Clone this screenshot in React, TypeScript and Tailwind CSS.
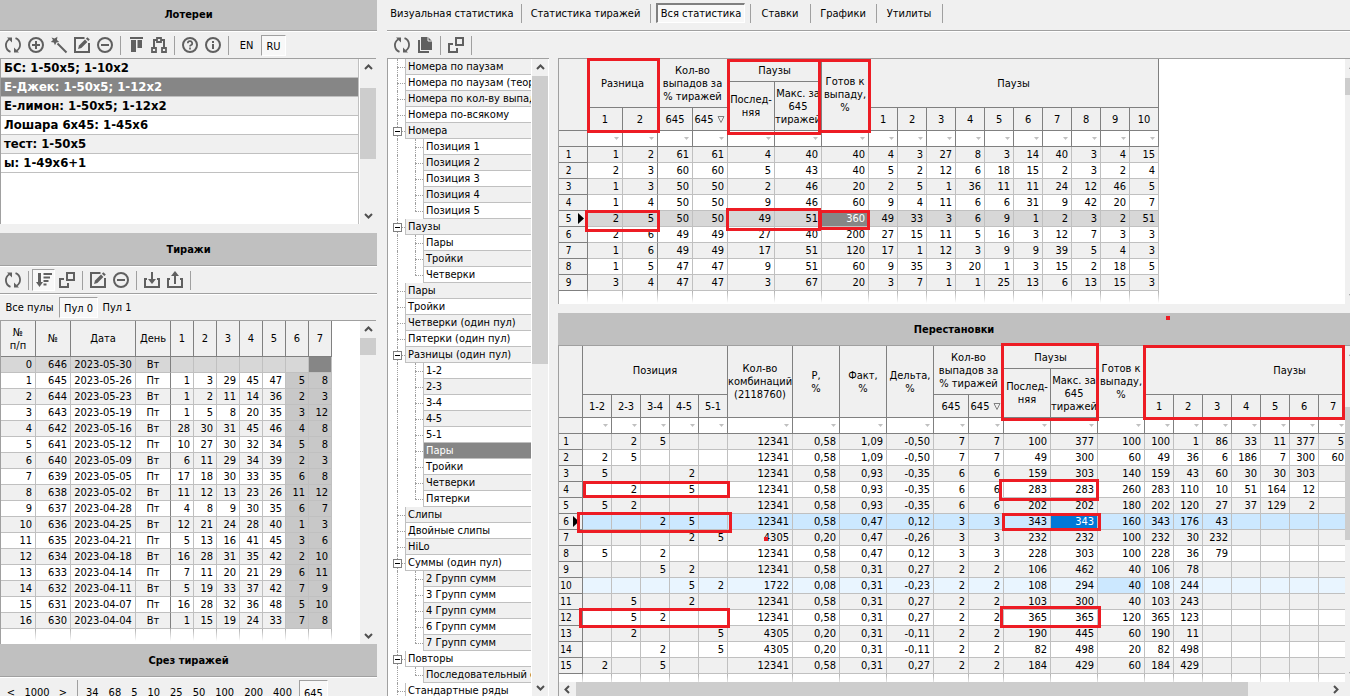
import { ReactNode } from "react"

const lotteries = [
  "БС: 1-50x5; 1-10x2",
  "Е-Джек: 1-50x5; 1-12x2",
  "Е-лимон: 1-50x5; 1-12x2",
  "Лошара 6x45: 1-45x6",
  "тест: 1-50x5",
  "ы: 1-49x6+1",
]

const draws = [
  "0|646|2023-05-30|Вт|||||||",
  "1|645|2023-05-26|Пт|1|3|29|45|47|5|8",
  "2|644|2023-05-23|Вт|1|2|11|14|36|2|3",
  "3|643|2023-05-19|Пт|1|5|8|20|35|3|12",
  "4|642|2023-05-16|Вт|28|30|31|45|46|4|8",
  "5|641|2023-05-12|Пт|10|27|30|32|34|5|8",
  "6|640|2023-05-09|Вт|6|11|29|34|39|2|3",
  "7|639|2023-05-05|Пт|17|18|30|33|35|6|8",
  "8|638|2023-05-02|Вт|11|12|13|23|26|11|12",
  "9|637|2023-04-28|Пт|4|8|9|30|35|6|7",
  "10|636|2023-04-25|Вт|12|21|24|28|40|1|3",
  "11|635|2023-04-21|Пт|5|13|16|41|45|3|6",
  "12|634|2023-04-18|Вт|16|28|31|35|42|2|10",
  "13|633|2023-04-14|Пт|7|11|20|21|29|6|11",
  "14|632|2023-04-11|Вт|5|19|33|37|42|7|9",
  "15|631|2023-04-07|Пт|16|28|32|36|48|5|10",
  "16|630|2023-04-04|Вт|1|15|19|24|33|7|8",
].map((row) => row.split("|"))

const diffs = [
  "1|2|61|61|4|40|40|4|3|27|8|3|14|40|3|4|15",
  "2|3|60|60|5|43|40|5|2|12|6|18|15|2|3|2|4",
  "1|3|50|50|2|46|20|2|5|1|36|11|11|24|12|46|5",
  "1|4|50|50|9|46|60|9|4|11|6|6|31|9|42|20|7",
  "2|5|50|50|49|51|360|49|33|3|6|9|1|2|3|2|51",
  "2|6|49|49|27|40|200|27|15|11|5|16|3|12|7|3|3",
  "1|6|49|49|17|51|120|17|1|12|3|9|9|39|5|4|3",
  "1|5|47|47|9|51|60|9|35|3|20|1|3|15|2|18|5",
  "3|4|47|47|3|67|20|3|7|1|1|25|13|6|13|15|3",
].map((row) => row.split("|"))

const swaps = [
  "|2|5|||12341|0,58|1,09|-0,50|7|7|100|377|100|100|1|86|33|11|377|5|||",
  "2|5||||12341|0,58|1,09|-0,50|7|7|49|300|60|49|36|6|186|7|300|60|||",
  "5|||2||12341|0,58|0,93|-0,35|6|6|159|303|140|159|43|60|30|30|303||||",
  "|2||5||12341|0,58|0,93|-0,35|6|6|283|283|260|283|110|10|51|164|12||||",
  "5|2||||12341|0,58|0,93|-0,35|6|6|202|202|180|202|120|27|37|129|2||||",
  "||2|5||12341|0,58|0,47|0,12|3|3|343|343|160|343|176|43|||||||",
  "|||2|5|4305|0,20|0,47|-0,26|3|3|232|232|100|232|30|232|||||||",
  "5||2|||12341|0,58|0,47|0,12|3|3|228|303|100|228|36|79|||||||",
  "||5|2||12341|0,58|0,31|0,27|2|2|106|462|40|106|78||||||||",
  "|||5|2|1722|0,08|0,31|-0,23|2|2|108|294|40|108|244||||||||",
  "|5||2||12341|0,58|0,31|0,27|2|2|103|300|40|103|243||||||||",
  "|5|2|||12341|0,58|0,31|0,27|2|2|365|365|120|365|123||||||||",
  "|2|||5|4305|0,20|0,31|-0,11|2|2|190|445|60|190|11||||||||",
  "||2||5|4305|0,20|0,31|-0,11|2|2|82|498|20|82|498||||||||",
  "2||5|||12341|0,58|0,31|0,27|2|2|184|429|60|184|429||||||||",
].map((row) => row.split("|"))

const tree: { label: string, children?: string[] }[] = [
  { label: "Номера по паузам" },
  { label: "Номера по паузам (теория)" },
  { label: "Номера по кол-ву выпадов" },
  { label: "Номера по-всякому" },
  { label: "Номера", children: ["Позиция 1", "Позиция 2", "Позиция 3", "Позиция 4", "Позиция 5"] },
  { label: "Паузы", children: ["Пары", "Тройки", "Четверки"] },
  { label: "Пары" },
  { label: "Тройки" },
  { label: "Четверки (один пул)" },
  { label: "Пятерки (один пул)" },
  { label: "Разницы (один пул)", children: ["1-2", "2-3", "3-4", "4-5", "5-1", "Пары", "Тройки", "Четверки", "Пятерки"] },
  { label: "Слипы" },
  { label: "Двойные слипы" },
  { label: "HiLo" },
  { label: "Суммы (один пул)", children: ["2 Групп сумм", "3 Групп сумм", "4 Групп сумм", "6 Групп сумм", "7 Групп сумм"] },
  { label: "Повторы", children: ["Последовательный состав"] },
  { label: "Стандартные ряды" },
]

const treeRows = tree.flatMap((node) => [
  { label: node.label, level: 0, parent: !!node.children, last: false, selected: false },
  ...(node.children ?? []).map((label, i, all) => ({
    label,
    level: 1,
    parent: false,
    last: i === all.length - 1,
    selected: node.label === "Разницы (один пул)" && label === "Пары",
  })),
])

const ten = ["1", "2", "3", "4", "5", "6", "7", "8", "9", "10"]

/* icons */
function Icon({ children }: { children: ReactNode }) {
  return (
    <svg width="18" height="18" viewBox="0 0 18 18" fill="none" stroke="#606060" strokeWidth="2" className="shrink-0">
      {children}
    </svg>
  )
}
const SyncIcon = () => (
  <Icon>
    <path d="M6.5 15.8A7 7 0 0 1 5.4 3.2M11.5 2.2A7 7 0 0 1 12.6 14.8" strokeWidth="1.8" />
    <path d="M3 1.5H8V6.5ZM15 16.5H10V11.5Z" fill="#606060" stroke="none" />
  </Icon>
)
const PlusIcon = () => (
  <Icon>
    <circle cx="9" cy="9" r="7" />
    <path d="M9 5V13M5 9H13" />
  </Icon>
)
const MinusIcon = () => (
  <Icon>
    <circle cx="9" cy="9" r="7" />
    <path d="M5 9H13" />
  </Icon>
)
const WandIcon = () => (
  <Icon>
    <path d="M7.5 7.5L16.5 16.5" />
    <path d="M1.5 1.5L4.6 2.6L7.4 0.8L7 4L9.2 6L6.4 6.6L5 9.2L3.8 6.4L0.8 6L3 4Z" fill="#606060" stroke="none" />
  </Icon>
)
const EditIcon = () => (
  <Icon>
    <path d="M11.5 2H2V16H16V7" />
    <path d="M5 13L6 9.6L12 3.6L14.4 6L8.4 12Z" fill="#606060" stroke="none" />
    <path d="M12.9 2.7L14.4 1.2L16.8 3.6L15.3 5.1Z" fill="#606060" stroke="none" />
  </Icon>
)
const AlignIcon = () => (
  <Icon>
    <path d="M3 2H16" />
    <path d="M4 4H9V16H4ZM10.5 4H15V12H10.5Z" fill="#606060" stroke="none" />
  </Icon>
)
const NodesIcon = () => (
  <Icon>
    <path d="M7 2H11V6H7ZM2 12H6V16H2ZM12 12H16V16H12Z" strokeWidth="1.8" />
    <path d="M7 4H4V12M11 4H14V12" />
  </Icon>
)
const HelpIcon = () => (
  <Icon>
    <circle cx="9" cy="9" r="7" />
    <path d="M6.8 7.2A2.2 2.1 0 1 1 9.8 9.2Q9 9.6 9 10.6M9 11.6V13.4" strokeWidth="1.7" />
  </Icon>
)
const InfoIcon = () => (
  <Icon>
    <circle cx="9" cy="9" r="7" />
    <path d="M9 8V13M9 5V7" />
  </Icon>
)
const SortIcon = () => (
  <Icon>
    <path d="M4.5 2V12" strokeWidth="3" />
    <path d="M1 11H8L4.5 16Z" fill="#606060" stroke="none" />
    <path d="M8.5 3H17M8.5 6.5H15M8.5 10H13.5M8.5 13.5H11.5" />
  </Icon>
)
const WindowsIcon = () => (
  <Icon>
    <path d="M9 2H16V9H9ZM6 8H2V16H10V12" />
  </Icon>
)
const DownloadIcon = () => (
  <Icon>
    <path d="M4 8H2V16H16V8H14M9 1V10" />
    <path d="M5 8H13L9 13Z" fill="#606060" stroke="none" />
  </Icon>
)
const UploadIcon = () => (
  <Icon>
    <path d="M4 8H2V16H16V8H14M9 4V13" />
    <path d="M5 5H13L9 0Z" fill="#606060" stroke="none" />
  </Icon>
)
const CopyIcon = () => (
  <Icon>
    <path d="M5 1H12L16 5V14H5Z" fill="#606060" stroke="none" />
    <path d="M12 1V5H16" stroke="#efefef" strokeWidth="1" />
    <path d="M3 4V16H13" />
  </Icon>
)
function Chevron({ d }: { d: string }) {
  return (
    <svg width="9" height="9" viewBox="0 0 9 9" fill="none" stroke="#505050" strokeWidth="2" className="shrink-0">
      <path d={d} />
    </svg>
  )
}

function ToolButton({ label, pressed, children }: { label: string, pressed?: boolean, children: ReactNode }) {
  return (
    <button
      aria-label={label}
      className={
        pressed
          ? "flex h-[22px] w-[23px] items-center justify-center border border-[#a0a0a0] border-r-white border-b-white bg-[#f8f8f8]"
          : "flex h-[22px] w-[23px] items-center justify-center"
      }
    >
      {children}
    </button>
  )
}

function Separator() {
  return (
    <div className="flex w-2 justify-center">
      <div className="h-[19px] w-px bg-[#a0a0a0]" />
    </div>
  )
}

function Title({ children }: { children: ReactNode }) {
  return (
    <h2 className="flex h-[33px] shrink-0 items-center justify-center border-b border-[#a0a0a0] bg-[#c0c0c0] text-[11px] font-bold">
      {children}
    </h2>
  )
}

function Scrollbar({ before, thumb }: { before: string, thumb: string }) {
  return (
    <div className="flex w-4 shrink-0 flex-col items-center bg-[#f0f0f0]">
      <div className="flex h-[17px] shrink-0 items-center">
        <Chevron d="M1 6L4.5 2.5L8 6" />
      </div>
      <div className={before} />
      <div className={`w-full shrink-0 bg-[#cdcdcd] ${thumb}`} />
      <div className="flex-1" />
      <div className="flex h-[17px] shrink-0 items-center">
        <Chevron d="M1 3L4.5 6.5L8 3" />
      </div>
    </div>
  )
}

function Th({ children, cols, rows }: { children?: ReactNode, cols?: number, rows?: number }) {
  return (
    <th
      colSpan={cols}
      rowSpan={rows}
      className="overflow-hidden border-r border-b border-[#808080] bg-[#f0f0f0] p-0 text-center align-middle leading-[13px] font-normal whitespace-nowrap"
    >
      <div className="flex justify-center">
        <div>{children}</div>
      </div>
    </th>
  )
}

function SortedHead() {
  return (
    <span className="flex items-center gap-1">
      645
      <svg width="8" height="9" viewBox="0 0 8 9" fill="none" stroke="#808080">
        <path d="M1 1.5H7L4 7.5Z" />
      </svg>
    </span>
  )
}

function FilterRow({ count }: { count: number }) {
  return (
    <tr className="h-4">
      <td className="border-r border-b border-[#808080] bg-[#f0f0f0] p-0" />
      {Array.from({ length: count }, (_, i) => (
        <td key={i} className="border-r border-b border-[#808080] bg-white p-0">
          <div className="flex justify-end pr-[3px]">
            <svg width="5" height="3" viewBox="0 0 5 3" fill="#c0c0c0">
              <path d="M0 0H5L2.5 3Z" />
            </svg>
          </div>
        </td>
      ))}
    </tr>
  )
}

function RowNumber({ n, current }: { n: number, current: boolean }) {
  return (
    <th className="border-r border-b border-[#808080] bg-[#f0f0f0] p-0 font-normal">
      <div className="flex items-center text-[10px] leading-[15px]">
        <span className="flex-1 text-center">{n}</span>
        <span className="w-[9px]">
          {current && (
            <svg width="6" height="11" viewBox="0 0 6 11" className="block">
              <path d="M0 0L6 5.5L0 11Z" />
            </svg>
          )}
        </span>
      </div>
    </th>
  )
}

function FadeRow({ count }: { count: number }) {
  return (
    <tr className="h-3">
      {Array.from({ length: count }, (_, i) => (
        <td key={i} className="bg-white p-0">
          <div className="flex h-3 justify-end">
            <div className="w-px bg-linear-to-b from-[#b0b0b0] to-white" />
          </div>
        </td>
      ))}
    </tr>
  )
}

function TreePanel() {
  return (
    <div className="flex w-[162px] shrink-0 gap-px border-t border-l border-[#a0a0a0] bg-white pr-px">
      <div className="min-w-0 flex-1 overflow-hidden">
        {treeRows.map((row, i) => (
          <div key={i} className="flex h-4">
            <div className="relative w-[17px] shrink-0">
              <div className="absolute inset-y-0 left-[9px] border-l border-dotted border-[#a0a0a0]" />
              {row.level === 0 && (
                <div className="absolute top-2 right-0 left-[9px] border-t border-dotted border-[#a0a0a0]" />
              )}
              {row.parent && (
                <button
                  aria-label="Свернуть"
                  className="absolute top-1 left-[5px] flex size-[9px] items-center justify-center border border-[#808080] bg-white"
                >
                  <span className="h-px w-[5px] bg-black" />
                </button>
              )}
            </div>
            {row.level === 1 && (
              <div className="relative w-[18px] shrink-0">
                <div
                  className={
                    row.last
                      ? "absolute top-0 left-[10px] h-2 border-l border-dotted border-[#a0a0a0]"
                      : "absolute inset-y-0 left-[10px] border-l border-dotted border-[#a0a0a0]"
                  }
                />
                <div className="absolute top-2 right-0 left-[10px] border-t border-dotted border-[#a0a0a0]" />
              </div>
            )}
            <button
              className={`min-w-0 flex-1 overflow-hidden border-b border-l border-[#c0c0c0] pl-0.5 text-left leading-[15px] whitespace-nowrap ${
                row.selected ? "bg-[#868686] text-white" : i % 2 ? "bg-white" : "bg-[#f0f0f0]"
              }`}
            >
              {row.label}
            </button>
          </div>
        ))}
      </div>
      <Scrollbar before="h-0" thumb="h-[288px]" />
    </div>
  )
}

function DrawsTable() {
  return (
    <table className="w-px table-fixed border-separate border-spacing-0 self-start">
      <colgroup>
        <col className="w-[35px]" />
        <col className="w-[35px]" />
        <col className="w-[65px]" />
        <col className="w-[35px]" />
        <col span={7} className="w-[23px]" />
      </colgroup>
      <thead>
        <tr className="h-9">
          <Th>№<br />п/п</Th>
          <Th>№</Th>
          <Th>Дата</Th>
          <Th>День</Th>
          {ten.slice(0, 7).map((n) => <Th key={n}>{n}</Th>)}
        </tr>
      </thead>
      <tbody>
        {draws.map((row, r) => (
          <tr key={r} className={r === 0 ? "h-4 bg-[#d7d7d7]" : r % 2 ? "h-4 bg-white" : "h-4 bg-[#f0f0f0]"}>
            {row.map((cell, c) => (
              <td
                key={c}
                className={`border-r border-b border-b-[#c0c0c0] p-0 leading-[15px] whitespace-nowrap ${
                  c === 3 ? "border-r-[#808080]" : "border-r-[#c0c0c0]"
                } ${c === 2 || c === 3 ? "text-center" : "pr-[3px] text-right"} ${
                  r === 0 && c === 10 ? "bg-[#868686]" : r > 0 && c > 8 ? "bg-[#c8c8c8]" : ""
                }`}
              >
                {cell}
              </td>
            ))}
          </tr>
        ))}
        <FadeRow count={11} />
      </tbody>
    </table>
  )
}

function DiffTable() {
  return (
    <table className="w-px table-fixed border-separate border-spacing-0 self-start">
      <colgroup>
        <col className="w-[29px]" />
        <col span={4} className="w-[35px]" />
        <col span={3} className="w-[47px]" />
        <col span={10} className="w-[29px]" />
      </colgroup>
      <thead>
        <tr className="h-[23px]">
          <Th rows={3} />
          <Th cols={2} rows={2}>Разница</Th>
          <Th cols={2} rows={2}>Кол-во<br />выпадов за<br />% тиражей</Th>
          <Th cols={2}>Паузы</Th>
          <Th rows={3}>Готов к<br />выпаду,<br />%</Th>
          <Th cols={10} rows={2}>Паузы</Th>
        </tr>
        <tr className="h-[26px]">
          <Th rows={2}>Послед-<br />няя</Th>
          <Th rows={2}>Макс. за<br />645<br />тиражей</Th>
        </tr>
        <tr className="h-[23px]">
          <Th>1</Th>
          <Th>2</Th>
          <Th>645</Th>
          <Th><SortedHead /></Th>
          {ten.map((n) => <Th key={n}>{n}</Th>)}
        </tr>
      </thead>
      <tbody>
        <FilterRow count={17} />
        {diffs.map((row, r) => (
          <tr key={r} className={r === 4 ? "h-4 bg-[#d7d7d7]" : r % 2 ? "h-4 bg-white" : "h-4 bg-[#f0f0f0]"}>
            <RowNumber n={r + 1} current={r === 4} />
            {row.map((cell, c) => (
              <td
                key={c}
                className={`border-r border-b border-b-[#c0c0c0] p-0 pr-[3px] text-right leading-[15px] ${
                  c === 1 ? "border-r-[#808080]" : "border-r-[#c0c0c0]"
                } ${r === 4 && c === 6 ? "bg-[#868686] text-white" : ""}`}
              >
                {cell}
              </td>
            ))}
          </tr>
        ))}
        <FadeRow count={18} />
      </tbody>
    </table>
  )
}

function SwapTable() {
  const rowColor = (r: number) =>
    r === 5 ? "h-4 bg-[#cce8ff]" : r === 9 ? "h-4 bg-[#e9f5ff]" : r % 2 ? "h-4 bg-white" : "h-4 bg-[#f0f0f0]"
  return (
    <table className="w-px table-fixed border-separate border-spacing-0 self-start">
      <colgroup>
        <col className="w-[24px]" />
        <col span={5} className="w-[29px]" />
        <col className="w-[65px]" />
        <col span={3} className="w-[47px]" />
        <col span={2} className="w-[35px]" />
        <col span={3} className="w-[47px]" />
        <col span={10} className="w-[29px]" />
      </colgroup>
      <thead>
        <tr className="h-[23px]">
          <Th rows={3} />
          <Th cols={5} rows={2}>Позиция</Th>
          <Th rows={3}>Кол-во<br />комбинаций<br />(2118760)</Th>
          <Th rows={3}>P,<br />%</Th>
          <Th rows={3}>Факт,<br />%</Th>
          <Th rows={3}>Дельта,<br />%</Th>
          <Th cols={2} rows={2}>Кол-во<br />выпадов за<br />% тиражей</Th>
          <Th cols={2}>Паузы</Th>
          <Th rows={3}>Готов к<br />выпаду,<br />%</Th>
          <Th cols={10} rows={2}>Паузы</Th>
        </tr>
        <tr className="h-[26px]">
          <Th rows={2}>Послед-<br />няя</Th>
          <Th rows={2}>Макс. за<br />645<br />тиражей</Th>
        </tr>
        <tr className="h-[23px]">
          {["1-2", "2-3", "3-4", "4-5", "5-1", "645"].map((n) => <Th key={n}>{n}</Th>)}
          <Th><SortedHead /></Th>
          {ten.map((n) => <Th key={n}>{n}</Th>)}
        </tr>
      </thead>
      <tbody>
        <FilterRow count={24} />
        {swaps.map((row, r) => (
          <tr key={r} className={rowColor(r)}>
            <RowNumber n={r + 1} current={r === 5} />
            {row.map((cell, c) => (
              <td
                key={c}
                className={`border-r border-b border-[#c0c0c0] p-0 pr-[3px] text-right leading-[15px] ${
                  r === 5 && c === 12 ? "bg-[#0078d7] text-white" : r === 9 && c === 13 ? "bg-[#cce8ff]" : ""
                }`}
              >
                {cell}
              </td>
            ))}
          </tr>
        ))}
        <FadeRow count={25} />
      </tbody>
    </table>
  )
}

/* red marker frames drawn over both tables */
const marks = [
  "left-[29px] top-0 h-[75px] w-[73px]",
  "left-[169px] top-px h-[76px] w-[94px]",
  "left-[260px] top-px h-[74px] w-[53px]",
  "left-[27px] top-[152px] h-[22px] w-[75px]",
  "left-[168px] top-[150px] h-[23px] w-[95px]",
  "left-[261px] top-[152px] h-[20px] w-[51px]",
  "left-[443px] top-[285px] h-[78px] w-[98px]",
  "left-[585px] top-[287px] h-[75px] w-[202px]",
  "left-[25px] top-[423px] h-[17px] w-[147px]",
  "left-[19px] top-[454px] h-[21px] w-[155px]",
  "left-[21px] top-[550px] h-[20px] w-[151px]",
  "left-[441px] top-[421px] h-[22px] w-[100px]",
  "left-[444px] top-[455px] h-[18px] w-[99px]",
  "left-[442px] top-[548px] h-[22px] w-[101px]",
]

function LeftPane() {
  return (
    <aside className="flex w-[377px] shrink-0 flex-col">
      <h2 className="flex h-[31px] shrink-0 items-center justify-center border-b border-[#a0a0a0] bg-[#c0c0c0] pb-0.5 text-[11px] font-bold">
        Лотереи
      </h2>
      <div className="flex h-[27px] shrink-0 items-center border-t border-white pl-px">
        <ToolButton label="Обновить"><SyncIcon /></ToolButton>
        <ToolButton label="Добавить"><PlusIcon /></ToolButton>
        <ToolButton label="Мастер"><WandIcon /></ToolButton>
        <ToolButton label="Изменить"><EditIcon /></ToolButton>
        <ToolButton label="Удалить"><MinusIcon /></ToolButton>
        <Separator />
        <ToolButton label="Выровнять"><AlignIcon /></ToolButton>
        <ToolButton label="Структура"><NodesIcon /></ToolButton>
        <Separator />
        <ToolButton label="Справка"><HelpIcon /></ToolButton>
        <ToolButton label="О программе"><InfoIcon /></ToolButton>
        <Separator />
        <button className="w-[29px]">EN</button>
        <button className="h-[21px] w-[25px] border border-[#a0a0a0] border-r-white border-b-white bg-[#f8f8f8] pt-0.5">RU</button>
      </div>
      <div className="mr-px flex h-[166px] shrink-0 border-t border-l border-[#a0a0a0] bg-white">
        <div className="mr-px flex-1 border-r border-[#c0c0c0]">
          {lotteries.map((name, i) => (
            <button
              key={name}
              className={`block h-[19px] w-full border-b border-[#c0c0c0] pl-[3px] text-left text-[13px] leading-[18px] font-bold ${
                i === 1 ? "bg-[#868686] text-white" : i % 2 ? "bg-white" : "bg-[#f0f0f0]"
              }`}
            >
              {name}
            </button>
          ))}
        </div>
        <Scrollbar before="h-3 shrink-0" thumb="h-[71px]" />
      </div>
      <div className="h-[9px] shrink-0" />
      <Title>Тиражи</Title>
      <div className="flex h-7 shrink-0 items-center border-t border-b border-t-white border-b-[#a0a0a0] pl-px">
        <ToolButton label="Обновить"><SyncIcon /></ToolButton>
        <Separator />
        <ToolButton label="Сортировка" pressed><SortIcon /></ToolButton>
        <ToolButton label="Окна"><WindowsIcon /></ToolButton>
        <Separator />
        <ToolButton label="Изменить"><EditIcon /></ToolButton>
        <ToolButton label="Удалить"><MinusIcon /></ToolButton>
        <Separator />
        <ToolButton label="Импорт"><DownloadIcon /></ToolButton>
        <ToolButton label="Экспорт"><UploadIcon /></ToolButton>
        <Separator />
      </div>
      <div className="flex h-[26px] shrink-0 items-center border-t border-white">
        <button className="w-[59px]">Все пулы</button>
        <button className="h-[21px] w-[39px] border border-[#a0a0a0] border-r-white border-b-white bg-[#f8f8f8] pt-0.5">Пул 0</button>
        <button className="w-[38px]">Пул 1</button>
      </div>
      <div className="mr-px flex min-h-0 flex-1 justify-between overflow-hidden border-t border-l border-[#a0a0a0] bg-white">
        <DrawsTable />
        <Scrollbar before="h-0" thumb="h-[17px]" />
      </div>
      <Title>Срез тиражей</Title>
      <div className="flex h-[19px] shrink-0 items-start overflow-hidden border-t border-white pt-0.5 pl-px leading-[25px]">
        <button className="w-5">&lt;</button>
        <button className="w-8">1000</button>
        <button className="w-5">&gt;</button>
        <Separator />
        {["34", "68", "5", "10", "25", "50", "100", "200", "400"].map((n) => (
          <button key={n} className="px-[5px]">{n}</button>
        ))}
        <button className="ml-0.5 border border-[#a0a0a0] border-r-white border-b-white bg-[#f8f8f8] px-1">645</button>
      </div>
    </aside>
  )
}

export default function App() {
  return (
    <div className="flex h-screen gap-2.5 overflow-hidden bg-[#f0f0f0] font-['DejaVu_Sans_Condensed','Noto_Sans',sans-serif] text-[11px] leading-[13px] text-black">
      <LeftPane />
      <main className="flex min-w-0 flex-1 flex-col">
        <nav className="flex h-[31px] shrink-0 items-center border-b border-[#a0a0a0] pb-1">
          <button className="w-[130px]">Визуальная статистика</button>
          <Separator />
          <button className="w-[121px]">Статистика тиражей</button>
          <Separator />
          <button className="ml-0.5 h-5 w-[89px] border-t-2 border-r border-b border-l-2 border-[#808080] border-r-white border-b-white bg-[#f8f8f8]">
            Вся статистика
          </button>
          <div className="w-px" />
          <Separator />
          <button className="w-[52px]">Ставки</button>
          <Separator />
          <button className="w-[58px]">Графики</button>
          <Separator />
          <button className="w-[58px]">Утилиты</button>
          <Separator />
        </nav>
        <div className="flex h-[27px] shrink-0 items-center border-t border-white pl-[3px]">
          <ToolButton label="Обновить"><SyncIcon /></ToolButton>
          <ToolButton label="Копировать"><CopyIcon /></ToolButton>
          <Separator />
          <ToolButton label="Окна"><WindowsIcon /></ToolButton>
          <Separator />
        </div>
        <div className="flex min-h-0 flex-1 gap-[9px]">
          <TreePanel />
          <div className="relative flex min-w-0 flex-1 flex-col">
            <div className="flex h-[246px] shrink-0 overflow-hidden border-t border-l border-[#a0a0a0] bg-white">
              <div className="min-w-0 flex-1 overflow-hidden">
                <DiffTable />
              </div>
              <div className="flex w-[5px] shrink-0 overflow-hidden">
                <Scrollbar before="h-0.5 shrink-0" thumb="h-[17px]" />
              </div>
            </div>
            <div className="h-[9px] shrink-0" />
            <Title>Перестановки</Title>
            <div className="flex min-h-0 flex-1 flex-col border-l border-[#a0a0a0]">
              <div className="flex min-h-0 flex-1 overflow-hidden bg-white">
                <div className="min-w-0 flex-1 overflow-hidden">
                  <SwapTable />
                </div>
                <div className="flex w-[5px] shrink-0 overflow-hidden">
                  <Scrollbar before="h-[44px] shrink-0" thumb="h-[133px]" />
                </div>
              </div>
              <div className="flex h-[14px] shrink-0 items-center bg-[#f0f0f0] pr-[10px]">
                <div className="flex w-[17px] justify-center">
                  <Chevron d="M6 1L2.5 4.5L6 8" />
                </div>
                <div className="flex h-full flex-1">
                  <div className="w-[89%] bg-[#cdcdcd]" />
                </div>
                <Chevron d="M3 1L6.5 4.5L3 8" />
              </div>
            </div>
            {marks.map((mark) => (
              <div key={mark} className={`pointer-events-none absolute border-3 border-[#ed1c24] ${mark}`} />
            ))}
            <div className="absolute top-[258px] left-[608px] size-1 bg-[#ed1c24]" />
            <div className="absolute top-[479px] left-[206px] size-1 bg-[#ed1c24]" />
          </div>
        </div>
      </main>
    </div>
  )
}
